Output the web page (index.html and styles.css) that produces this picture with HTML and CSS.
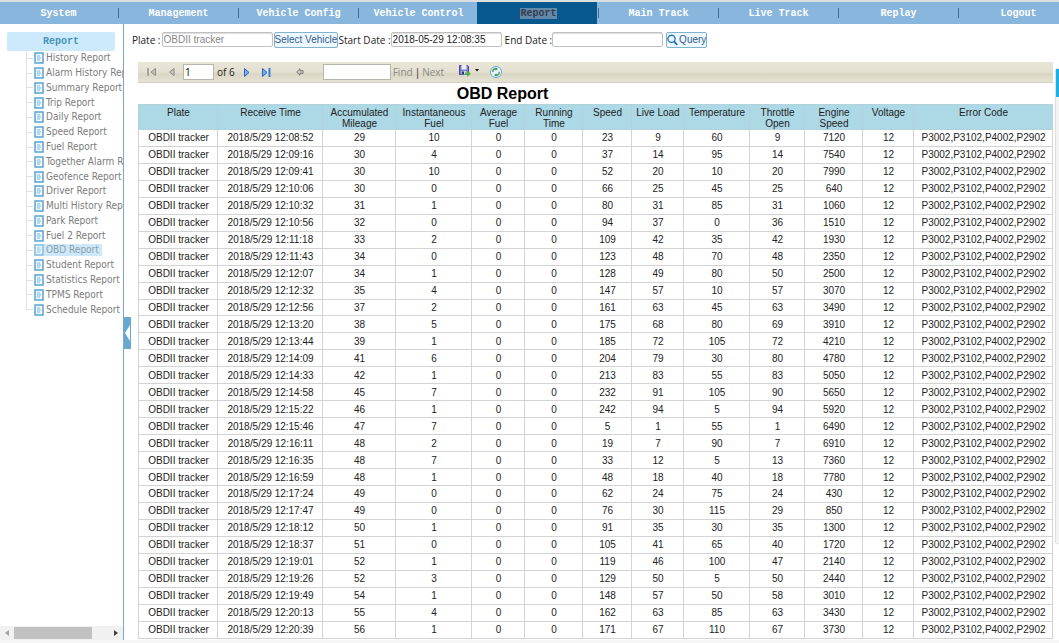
FILE: index.html
```html
<!DOCTYPE html>
<html lang="en">

<head>
    <meta charset="UTF-8">
    <meta name="viewport" content="width=device-width, initial-scale=1.0">
    <title>OBD Report</title>
    <link rel="stylesheet" href="styles.css">
</head>

<body>
    <nav class="main-nav">
        <a href="#">System</a>
        <a href="#">Management</a>
        <a href="#">Vehicle Config</a>
        <a href="#">Vehicle Control</a>
        <a href="#" class="active"><span>Report</span></a>
        <a href="#">Main Track</a>
        <a href="#">Live Track</a>
        <a href="#">Replay</a>
        <a href="#">Logout</a>
    </nav>

    <div class="layout">
        <aside class="sidebar">
            <h2>Report</h2>
            <ul class="tree" id="tree"></ul>
            <div class="scrollbar">
                <button type="button" aria-label="Scroll left"><svg width="4" height="6"><path d="M4 0v6L0 3z" fill="#a3a3a3"/></svg></button>
                <div class="track"><div class="thumb"></div></div>
                <button type="button" aria-label="Scroll right"><svg width="4" height="6"><path d="M0 0v6l4-3z" fill="#404040"/></svg></button>
            </div>
        </aside>

        <button type="button" class="collapse" aria-label="Collapse menu">
            <svg width="5" height="16"><path d="M5 0v16L0 8z" fill="#fff"/></svg>
        </button>

        <main>
            <form class="search" id="searchForm">
                <label for="plate">Plate :</label>
                <input type="text" id="plate" class="plate" value="OBDII tracker">
                <button type="button" class="select-btn">Select Vehicle</button>
                <label for="startDate">Start Date :</label>
                <input type="text" id="startDate" value="2018-05-29 12:08:35">
                <label for="endDate">End Date :</label>
                <input type="text" id="endDate">
                <button type="submit" class="query-btn">
                    <svg width="11" height="12" viewBox="0 0 11 12" fill="none" stroke="#2878b8"><circle cx="4.5" cy="4.8" r="3.6" stroke-width="1.4"/><path d="M7 7.5l3.2 3.4" stroke-width="2"/></svg>
                    Query
                </button>
            </form>

            <section class="report">
                <div class="toolbar">
                    <button type="button" class="first" aria-label="First page"><svg width="9" height="8"><path d="M0 0h2v8H0z" fill="#a8a69c"/><path d="M8.5.5v7L4 4z" fill="#c5c3bb" stroke="#8f8d85"/></svg></button>
                    <button type="button" class="prev" aria-label="Previous page"><svg width="6" height="8"><path d="M5 .5v7L.5 4z" fill="#c5c3bb" stroke="#8f8d85"/></svg></button>
                    <input type="text" class="page" value="1" aria-label="Page">
                    <span>of 6</span>
                    <button type="button" class="next" aria-label="Next page"><svg width="6" height="9"><path d="M.5.5v8l4.5-4z" fill="#78aef0" stroke="#2464c4"/></svg></button>
                    <button type="button" class="last" aria-label="Last page"><svg width="9" height="9"><path d="M.5.5v8l4.500-4z" fill="#78aef0" stroke="#2464c4"/><path d="M6.5 0h2v9h-2z" fill="#3f7bd8"/></svg></button>
                    <button type="button" class="back" aria-label="Back"><svg width="8" height="8"><path d="M.7 4L4 .8v1.9h3v2.6H4v1.9z" fill="#cfcdc4" stroke="#77756d"/></svg></button>
                    <input type="text" class="find" aria-label="Find text">
                    <a href="#">Find</a> <span class="bar">|</span> <a href="#">Next</a>
                    <button type="button" class="export" aria-label="Export">
                        <svg width="20" height="12" viewBox="0 0 20 12"><path d="M.5.5h8l1 1v8h-9z" fill="#7a7cd0" stroke="#4547a0"/><path d="M2.5 0h5v4.500h-5z" fill="#eef0fb"/><path d="M2.500 6h5v3.500h-5z" fill="#d5d5e0"/><path d="M3 6.500h2v3H3z" fill="#33357c"/><path d="M6 7.800h2.200V5.800l3.800 3-3.800 3v-2H6z" fill="#4fae45"/><path d="M16 4h4l-2 2.5z" fill="#111"/></svg>
                    </button>
                    <button type="button" class="refresh" aria-label="Refresh">
                        <svg width="12" height="12" viewBox="0 0 12 12"><circle cx="6" cy="6" r="5.5" fill="#eef6fd" stroke="#6fa3d4"/><path d="M3 6.2V4.5Q3 3 4.5 3H6" fill="none" stroke="#2e9d52" stroke-width="1.3"/><path d="M5.5 1.2L8 3 5.5 4.800zM6.5 7.2L4 9l2.5 1.8z" fill="#2e9d52"/><path d="M9 5.8v1.7Q9 9 7.5 9H6" fill="none" stroke="#2e9d52" stroke-width="1.3"/></svg>
                    </button>
                </div>

                <h1>OBD Report</h1>
                <table>
                    <colgroup>
                        <col class="c-plate"><col class="c-time"><col class="c-mileage"><col class="c-instant"><col class="c-average"><col class="c-running"><col class="c-speed"><col class="c-load"><col class="c-temp"><col class="c-throttle"><col class="c-engine"><col class="c-voltage"><col>
                    </colgroup>
                    <thead>
                        <tr>
                            <th>Plate</th>
                            <th>Receive Time</th>
                            <th>Accumulated Mileage</th>
                            <th>Instantaneous Fuel</th>
                            <th>Average Fuel</th>
                            <th>Running Time</th>
                            <th>Speed</th>
                            <th>Live Load</th>
                            <th>Temperature</th>
                            <th>Throttle Open</th>
                            <th>Engine Speed</th>
                            <th>Voltage</th>
                            <th>Error Code</th>
                        </tr>
                    </thead>
                    <tbody id="rows"></tbody>
                </table>
            </section>
        </main>
    </div>
    <div class="side-tab"></div>

    <script>
        const reports = ['History Report', 'Alarm History Report', 'Summary Report', 'Trip Report', 'Daily Report',
            'Speed Report', 'Fuel Report', 'Together Alarm Report', 'Geofence Report', 'Driver Report',
            'Multi History Report', 'Park Report', 'Fuel 2 Report', 'OBD Report', 'Student Report',
            'Statistics Report', 'TPMS Report', 'Schedule Report'];

        // time, mileage, instant fuel, speed, load, temperature, throttle, engine speed
        const records = [
            ['12:08:52', 29, 10, 23, 9, 60, 9, 7120],
            ['12:09:16', 30, 4, 37, 14, 95, 14, 7540],
            ['12:09:41', 30, 10, 52, 20, 10, 20, 7990],
            ['12:10:06', 30, 0, 66, 25, 45, 25, 640],
            ['12:10:32', 31, 1, 80, 31, 85, 31, 1060],
            ['12:10:56', 32, 0, 94, 37, 0, 36, 1510],
            ['12:11:18', 33, 2, 109, 42, 35, 42, 1930],
            ['12:11:43', 34, 0, 123, 48, 70, 48, 2350],
            ['12:12:07', 34, 1, 128, 49, 80, 50, 2500],
            ['12:12:32', 35, 4, 147, 57, 10, 57, 3070],
            ['12:12:56', 37, 2, 161, 63, 45, 63, 3490],
            ['12:13:20', 38, 5, 175, 68, 80, 69, 3910],
            ['12:13:44', 39, 1, 185, 72, 105, 72, 4210],
            ['12:14:09', 41, 6, 204, 79, 30, 80, 4780],
            ['12:14:33', 42, 1, 213, 83, 55, 83, 5050],
            ['12:14:58', 45, 7, 232, 91, 105, 90, 5650],
            ['12:15:22', 46, 1, 242, 94, 5, 94, 5920],
            ['12:15:46', 47, 7, 5, 1, 55, 1, 6490],
            ['12:16:11', 48, 2, 19, 7, 90, 7, 6910],
            ['12:16:35', 48, 7, 33, 12, 5, 13, 7360],
            ['12:16:59', 48, 1, 48, 18, 40, 18, 7780],
            ['12:17:24', 49, 0, 62, 24, 75, 24, 430],
            ['12:17:47', 49, 0, 76, 30, 115, 29, 850],
            ['12:18:12', 50, 1, 91, 35, 30, 35, 1300],
            ['12:18:37', 51, 0, 105, 41, 65, 40, 1720],
            ['12:19:01', 52, 1, 119, 46, 100, 47, 2140],
            ['12:19:26', 52, 3, 129, 50, 5, 50, 2440],
            ['12:19:49', 54, 1, 148, 57, 50, 58, 3010],
            ['12:20:13', 55, 4, 162, 63, 85, 63, 3430],
            ['12:20:39', 56, 1, 171, 67, 110, 67, 3730]
        ];

        const icon = '<svg width="10" height="12"><path d="M1 1h8v10H1z" fill="#eef8fe" stroke="#5ba3d0" stroke-width="1.5"/><path d="M3 4h3M3 6h4M3 8h3" stroke="#7fb5d9"/></svg>';

        document.getElementById('tree').innerHTML = reports.map(name =>
            `<li><a href="#"${name === 'OBD Report' ? ' class="selected"' : ''}>${icon}${name}</a></li>`).join('');

        document.getElementById('rows').innerHTML = records.map(([time, mileage, instant, ...rest]) => {
            const cells = ['OBDII tracker', `2018/5/29 ${time}`, mileage, instant, 0, 0, ...rest, 12, 'P3002,P3102,P4002,P2902'];
            return `<tr>${cells.map(c => `<td>${c}</td>`).join('')}</tr>`;
        }).join('');

        document.getElementById('searchForm').addEventListener('submit', event => event.preventDefault());
    </script>
</body>

</html>
```
FILE: styles.css
```css
* {
    box-sizing: border-box;
}

body {
    margin: 0;
    height: 100vh;
    display: flex;
    flex-direction: column;
    overflow: hidden;
    position: relative;
    background: #fff;
    border-top: 2px solid #dcdfe0;
    border-bottom: 3px solid #f6f6f6;
    font-family: "Liberation Sans", Arial, sans-serif;
    font-size: 10px;
    color: #222;
}

a {
    text-decoration: none;
}

button {
    padding: 0;
    border: none;
    background: none;
    font: inherit;
    cursor: pointer;
}

svg {
    display: block;
    flex: none;
}

/* top menu */
.main-nav {
    display: flex;
    flex: none;
    height: 22px;
    margin-left: -3px;
    overflow: hidden;
    background: #88b6dc;
}

.main-nav a {
    display: flex;
    flex: 0 0 120px;
    align-items: center;
    justify-content: center;
    padding-left: 3px;
    color: #fff;
    font-family: "Liberation Mono", "Courier New", monospace;
    font-weight: bold;
}

/* separators */
.main-nav a + a {
    background: linear-gradient(#3f6d94, #3f6d94) 1px center / 1px 10px no-repeat;
}

.main-nav a.active {
    color: #333f50;
    background: #07588f;
}

.main-nav a.active span {
    background: #6389a9;
}

.layout {
    display: flex;
    flex: 1;
    min-height: 0;
    position: relative;
}

/* left menu */
.sidebar {
    display: flex;
    flex: 0 0 124px;
    flex-direction: column;
    overflow: hidden;
    border-right: 1px solid #7da7cc;
}

.sidebar h2 {
    flex: none;
    margin: 8px 8px 0 7px;
    border-radius: 2px;
    background: #cde9fc;
    color: #4794b5;
    font-family: "Liberation Mono", "Courier New", monospace;
    font-size: 10px;
    line-height: 19px;
    text-align: center;
}

.tree {
    display: grid;
    grid-auto-rows: 1fr;
    height: 266px;
    margin: 0 0 0 26px;
    padding: 0;
    list-style: none;
    font-family: "DejaVu Sans Condensed", "DejaVu Sans", sans-serif;
    background: linear-gradient(#e2e2e2, #e2e2e2) 0 0 / 1px 259px no-repeat;
}

.tree li {
    display: flex;
    align-items: center;
    min-height: 0;
    padding-left: 8px;
    white-space: nowrap;
    background: linear-gradient(#e2e2e2, #e2e2e2) 0 center / 7px 1px no-repeat;
}

.tree a {
    display: flex;
    align-items: center;
    gap: 2px;
    padding-right: 3px;
    line-height: 12px;
    color: #7c7c7c;
}

.tree a.selected {
    background: #cde8f8;
    color: #8ba0ac;
}

.tree a.selected svg {
    opacity: 0.6;
}

.scrollbar {
    display: flex;
    height: 14px;
    margin-top: auto;
    background: #f1f1f1;
}

.scrollbar button {
    display: flex;
    width: 14px;
    align-items: center;
    justify-content: center;
}

.track {
    flex: 1;
    padding: 1px 0;
}

.thumb {
    width: 82%;
    height: 100%;
    background: #c1c1c1;
}

.collapse {
    display: flex;
    position: absolute;
    top: 293px;
    left: 124px;
    width: 7px;
    height: 32px;
    align-items: center;
    justify-content: center;
    background: #66a8d0;
}

/* search form */
main {
    flex: 1;
    min-width: 0;
    overflow: hidden;
    padding: 7px 6px 0 8px;
}

.search {
    display: flex;
    align-items: center;
    height: 17px;
    font-family: "Open Sans", sans-serif;
}

.search input {
    width: 111px;
    height: 15px;
    margin: 0 3px 0 0;
    padding: 0 1px;
    border: 1px solid #c0c0c0;
    border-radius: 2px;
    box-shadow: inset 0 1px 1px #ddd;
    font: 10px "Liberation Sans", Arial, sans-serif;
    color: #222;
}

.search .plate {
    margin: 0 1px;
    color: #888;
}

.search button {
    height: 16px;
    border: 1px solid #7fb3cf;
    border-radius: 2px;
    background: #eef8ff;
    color: #345e94;
    font-family: "Liberation Sans", Arial, sans-serif;
}

.search .select-btn {
    width: 64px;
    margin-right: 1px;
    white-space: nowrap;
}

.search .query-btn {
    display: flex;
    align-items: center;
    justify-content: center;
    gap: 1px;
    width: 41px;
}

/* report viewer */
.report {
    margin: 14px 0 0 6px;
}

.toolbar {
    display: flex;
    align-items: center;
    height: 21px;
    padding-left: 9px;
    border-bottom: 1px solid #d3d0c0;
    background: linear-gradient(#e9e6d8, #e3e0d1 50%, #d9d6c4 60%, #e6e3d5);
    font-family: "Open Sans", sans-serif;
}

.toolbar input {
    height: 16px;
    padding: 0 1px;
    border: 1px solid #b5b5a8;
    font: inherit;
}

.toolbar a {
    color: #8a8a82;
}

.prev {
    margin: 0 8px 0 13px;
}

.page {
    width: 31px;
    margin-right: 3px;
}

.next {
    margin: 0 12px 0 9px;
}

.back {
    margin: 0 19px 0 25px;
}

.find {
    width: 68px;
    margin-right: 2px;
}

.bar {
    margin: 0 2px;
}

.export {
    margin: 0 11px 2px 15px;
}

h1 {
    margin: 0;
    padding-right: 186px;
    color: #000;
    font-size: 16px;
    line-height: 21px;
    text-align: center;
}

table {
    width: 100%;
    height: 535px;
    table-layout: fixed;
    border-collapse: collapse;
}

th,
td {
    padding: 0 0 0 1px;
    border: 1px solid #d3d3d3;
    line-height: 15px;
    text-align: center;
    white-space: nowrap;
}

th {
    padding: 2px 2px 0 3px;
    border-color: #b3d3dc;
    background: #add8e6;
    font-weight: normal;
    line-height: 11px;
    vertical-align: top;
    white-space: normal;
}

.c-plate {
    width: 79px;
}

.c-time {
    width: 105px;
}

.c-mileage {
    width: 73px;
}

.c-instant {
    width: 76px;
}

.c-average {
    width: 53px;
}

.c-running {
    width: 58px;
}

.c-speed {
    width: 49px;
}

.c-load {
    width: 52px;
}

.c-temp {
    width: 66px;
}

.c-throttle {
    width: 55px;
}

.c-engine {
    width: 58px;
}

.c-voltage {
    width: 51px;
}

/* floating panel handle at the right edge */
.side-tab {
    position: absolute;
    top: 67px;
    right: 0;
    width: 3px;
    height: 474px;
    background: linear-gradient(#1cb0e6 28px, #f3f3f3 28px);
    box-shadow: 0 0 2px #888;
}
```
